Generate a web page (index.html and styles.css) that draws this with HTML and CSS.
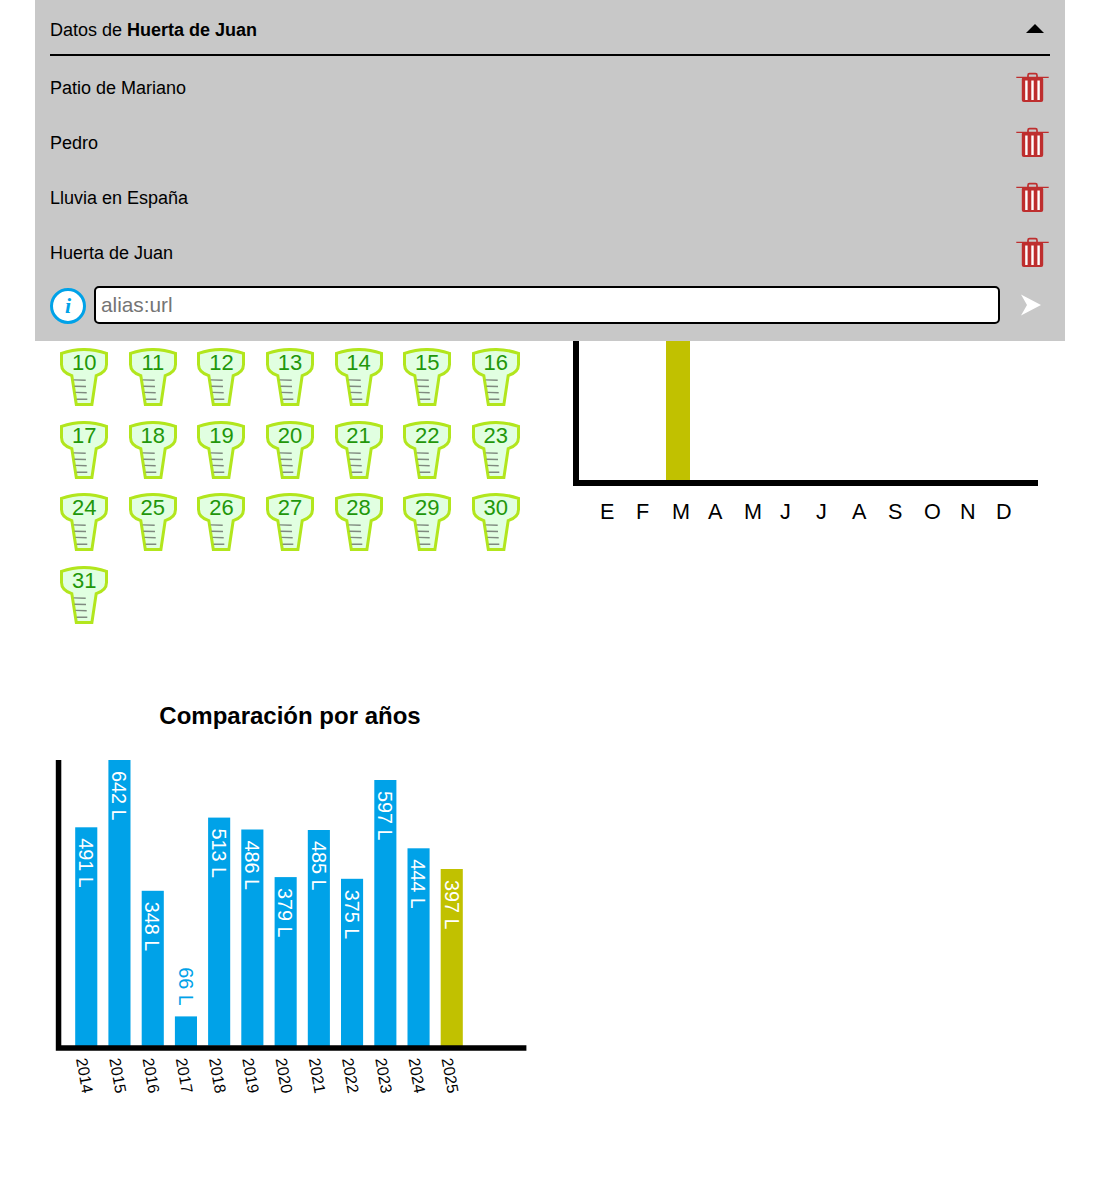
FILE: index.html
```html
<!DOCTYPE html>
<html lang="es">
<head>
<meta charset="utf-8">
<title>Datos de lluvia</title>
<link rel="stylesheet" href="styles.css">
</head>
<body>
<svg class="defs" aria-hidden="true">
  <symbol id="trash" viewBox="0 0 33 31">
    <path d="M12 5.4V3.2Q12 1.6 13.6 1.6H19.4Q21 1.6 21 3.2V5.4" fill="none" stroke="#be2e2e" stroke-width="1.7"/>
    <path d="M0.3 5.3H32.7" stroke="#be2e2e" stroke-width="1.3"/>
    <rect x="5.8" y="5" width="21.4" height="25" rx="2" fill="#be2e2e"/>
    <path d="M10.4 8.5V28M16.5 8.5V28M22.6 8.5V28" stroke="#fff" stroke-width="2.4" stroke-linecap="butt"/>
  </symbol>
  <symbol id="gauge" viewBox="0 0 48 58">
    <path d="M1.5 5.4Q24 -2.4 46.5 5.4V16.5C46.5 22.5 42 25.8 36.2 27.6L31.9 56.5H16.3L11.8 27.6C6 25.8 1.5 22.5 1.5 16.5Z" fill="#e1ffe1" stroke="#b2e61d" stroke-width="3"/>
    <path d="M13.7 31.9 25.7 32.3M14.5 38.2 26 38.5M15.5 44.4 26.7 44.8M16.7 51.2H27.3" fill="none" stroke="#7f8a7f" stroke-width="1.4"/>
  </symbol>
</svg>
<header class="panel">
  <div class="panel-head"><span>Datos de <b>Huerta de Juan</b></span>
    <svg class="caret" width="18" height="9"><path d="M0 9L9 0L18 9Z"/></svg></div>
  <ul class="places">
    <li><span>Patio de Mariano</span><svg class="trash"><use href="#trash"/></svg></li>
    <li><span>Pedro</span><svg class="trash"><use href="#trash"/></svg></li>
    <li><span>Lluvia en España</span><svg class="trash"><use href="#trash"/></svg></li>
    <li><span>Huerta de Juan</span><svg class="trash"><use href="#trash"/></svg></li>
  </ul>
  <form class="add">
    <span class="info">i</span>
    <input class="url" type="text" placeholder="alias:url">
    <svg class="send" width="20" height="22"><path d="M0 0.5L20 11L0 21.5L6 11Z" fill="#fff"/></svg>
  </form>
</header>
<main class="content">
  <section class="calendar">
    <div class="day"><svg><use href="#gauge"/></svg><span>10</span></div>
    <div class="day"><svg><use href="#gauge"/></svg><span>11</span></div>
    <div class="day"><svg><use href="#gauge"/></svg><span>12</span></div>
    <div class="day"><svg><use href="#gauge"/></svg><span>13</span></div>
    <div class="day"><svg><use href="#gauge"/></svg><span>14</span></div>
    <div class="day"><svg><use href="#gauge"/></svg><span>15</span></div>
    <div class="day"><svg><use href="#gauge"/></svg><span>16</span></div>
    <div class="day"><svg><use href="#gauge"/></svg><span>17</span></div>
    <div class="day"><svg><use href="#gauge"/></svg><span>18</span></div>
    <div class="day"><svg><use href="#gauge"/></svg><span>19</span></div>
    <div class="day"><svg><use href="#gauge"/></svg><span>20</span></div>
    <div class="day"><svg><use href="#gauge"/></svg><span>21</span></div>
    <div class="day"><svg><use href="#gauge"/></svg><span>22</span></div>
    <div class="day"><svg><use href="#gauge"/></svg><span>23</span></div>
    <div class="day"><svg><use href="#gauge"/></svg><span>24</span></div>
    <div class="day"><svg><use href="#gauge"/></svg><span>25</span></div>
    <div class="day"><svg><use href="#gauge"/></svg><span>26</span></div>
    <div class="day"><svg><use href="#gauge"/></svg><span>27</span></div>
    <div class="day"><svg><use href="#gauge"/></svg><span>28</span></div>
    <div class="day"><svg><use href="#gauge"/></svg><span>29</span></div>
    <div class="day"><svg><use href="#gauge"/></svg><span>30</span></div>
    <div class="day"><svg><use href="#gauge"/></svg><span>31</span></div>
  </section>
  <svg class="months" width="480" height="200" viewBox="570 341 480 200">
    <rect class="current" x="666" y="341" width="24" height="140"/>
    <path d="M573 341H579V480H1038V486H573Z"/>
    <g class="month-names">
      <text x="600" y="519">E</text><text x="636" y="519">F</text><text x="672" y="519">M</text>
      <text x="708" y="519">A</text><text x="744" y="519">M</text><text x="780" y="519">J</text>
      <text x="816" y="519">J</text><text x="852" y="519">A</text><text x="888" y="519">S</text>
      <text x="924" y="519">O</text><text x="960" y="519">N</text><text x="996" y="519">D</text>
    </g>
  </svg>
  <section class="compare">
    <h2>Comparación por años</h2>
    <svg width="480" height="350" viewBox="50 755 480 350">
      <g class="bars">
        <rect x="75.2" y="827.3" width="22.1" height="219"/>
        <rect x="108.4" y="760" width="22.1" height="286"/>
        <rect x="141.7" y="890.8" width="22.1" height="155"/>
        <rect x="174.9" y="1016.4" width="22.1" height="30"/>
        <rect x="208.1" y="817.6" width="22.1" height="228"/>
        <rect x="241.3" y="829.5" width="22.1" height="216"/>
        <rect x="274.6" y="877.1" width="22.1" height="169"/>
        <rect x="307.8" y="830" width="22.1" height="216"/>
        <rect x="341" y="878.8" width="22.1" height="167"/>
        <rect x="374.3" y="780" width="22.1" height="266"/>
        <rect x="407.5" y="848.3" width="22.1" height="198"/>
        <rect class="current" x="440.7" y="869" width="22.1" height="177"/>
      </g>
      <path d="M55.8 760H61.3V1045.3H526.4V1050.8H55.8Z"/>
      <g class="values">
        <text transform="translate(79.2 838.2) rotate(90)">491 L</text>
        <text transform="translate(112.4 770.9) rotate(90)">642 L</text>
        <text transform="translate(145.4 901.7) rotate(90)">348 L</text>
        <text class="low" transform="translate(179.1 967.2) rotate(90)">66 L</text>
        <text transform="translate(212.2 828.5) rotate(90)">513 L</text>
        <text transform="translate(245.2 840.4) rotate(90)">486 L</text>
        <text transform="translate(278.4 888) rotate(90)">379 L</text>
        <text transform="translate(312 840.9) rotate(90)">485 L</text>
        <text transform="translate(345 889.7) rotate(90)">375 L</text>
        <text transform="translate(378.2 790.9) rotate(90)">597 L</text>
        <text transform="translate(411.2 859.2) rotate(90)">444 L</text>
        <text transform="translate(445 879.9) rotate(90)">397 L</text>
      </g>
      <g class="years">
        <text transform="translate(76.1 1059) rotate(80)">2014</text>
        <text transform="translate(109.3 1059) rotate(80)">2015</text>
        <text transform="translate(142.6 1059) rotate(80)">2016</text>
        <text transform="translate(175.8 1059) rotate(80)">2017</text>
        <text transform="translate(209 1059) rotate(80)">2018</text>
        <text transform="translate(242.2 1059) rotate(80)">2019</text>
        <text transform="translate(275.5 1059) rotate(80)">2020</text>
        <text transform="translate(308.7 1059) rotate(80)">2021</text>
        <text transform="translate(341.9 1059) rotate(80)">2022</text>
        <text transform="translate(375.2 1059) rotate(80)">2023</text>
        <text transform="translate(408.4 1059) rotate(80)">2024</text>
        <text transform="translate(441.6 1059) rotate(80)">2025</text>
      </g>
    </svg>
  </section>
</main>
</body>
</html>
```
FILE: styles.css
```css
* { box-sizing: border-box; }
body { margin: 0 35px; background: #fff; color: #000; font-family: "Liberation Sans", Arial, sans-serif; font-size: 18px; }
svg { display: block; flex: none; }
.defs { display: none; }
.panel { height: 341px; padding: 0 15px; background: #c8c8c8; }
.panel-head { display: flex; align-items: center; justify-content: space-between; height: 56px; padding: 3px 6px 0 0; border-bottom: 2px solid #000; }
.panel-head span { padding-top: 4px; }
.caret { margin-top: -1px; }
.places { list-style: none; margin: 4px 0 0; padding: 0; }
.places li { display: flex; align-items: center; justify-content: space-between; height: 55px; }
.places span { padding-top: 2px; }
.trash { width: 33px; height: 31px; margin-right: 1px; }
.add { display: flex; align-items: center; margin: 6px 0 0; height: 38px; }
.info { width: 36px; height: 36px; margin: 2px 8px 0 0; border: 3px solid #00a2e8; border-radius: 50%; background: #fff; color: #00a2e8; font: italic bold 22px/30px "Liberation Serif", serif; text-align: center; }
.url { flex: none; width: 906px; height: 38px; padding: 0 5px; border: 2px solid #000; border-radius: 5px; background: #fff; font: 20.8px "Liberation Sans", Arial, sans-serif; }
.url::placeholder { color: #757575; }
.send { margin-left: 21px; }
.content { display: grid; grid-template-columns: 480px 480px; column-gap: 40px; padding: 0 15px; }
.calendar { display: grid; grid-template-columns: repeat(7, 1fr); grid-auto-rows: 72.6px; padding-top: 7px; height: 357px; }
.day { display: grid; justify-items: center; align-items: start; color: #22970a; font-size: 22px; line-height: 30px; }
.day svg, .day span { grid-area: 1 / 1; }
.day svg { width: 48px; height: 58px; overflow: visible; }
.current, .bars .current { fill: #c1c100; }
.month-names { font-size: 21.6px; }
.compare h2 { margin: 0; height: 57px; font-size: 24px; line-height: 36px; text-align: center; }
.bars { fill: #00a2e8; }
.values { font-size: 19.8px; fill: #fff; }
.values .low { fill: #00a2e8; }
.years { font-size: 16px; }
```
